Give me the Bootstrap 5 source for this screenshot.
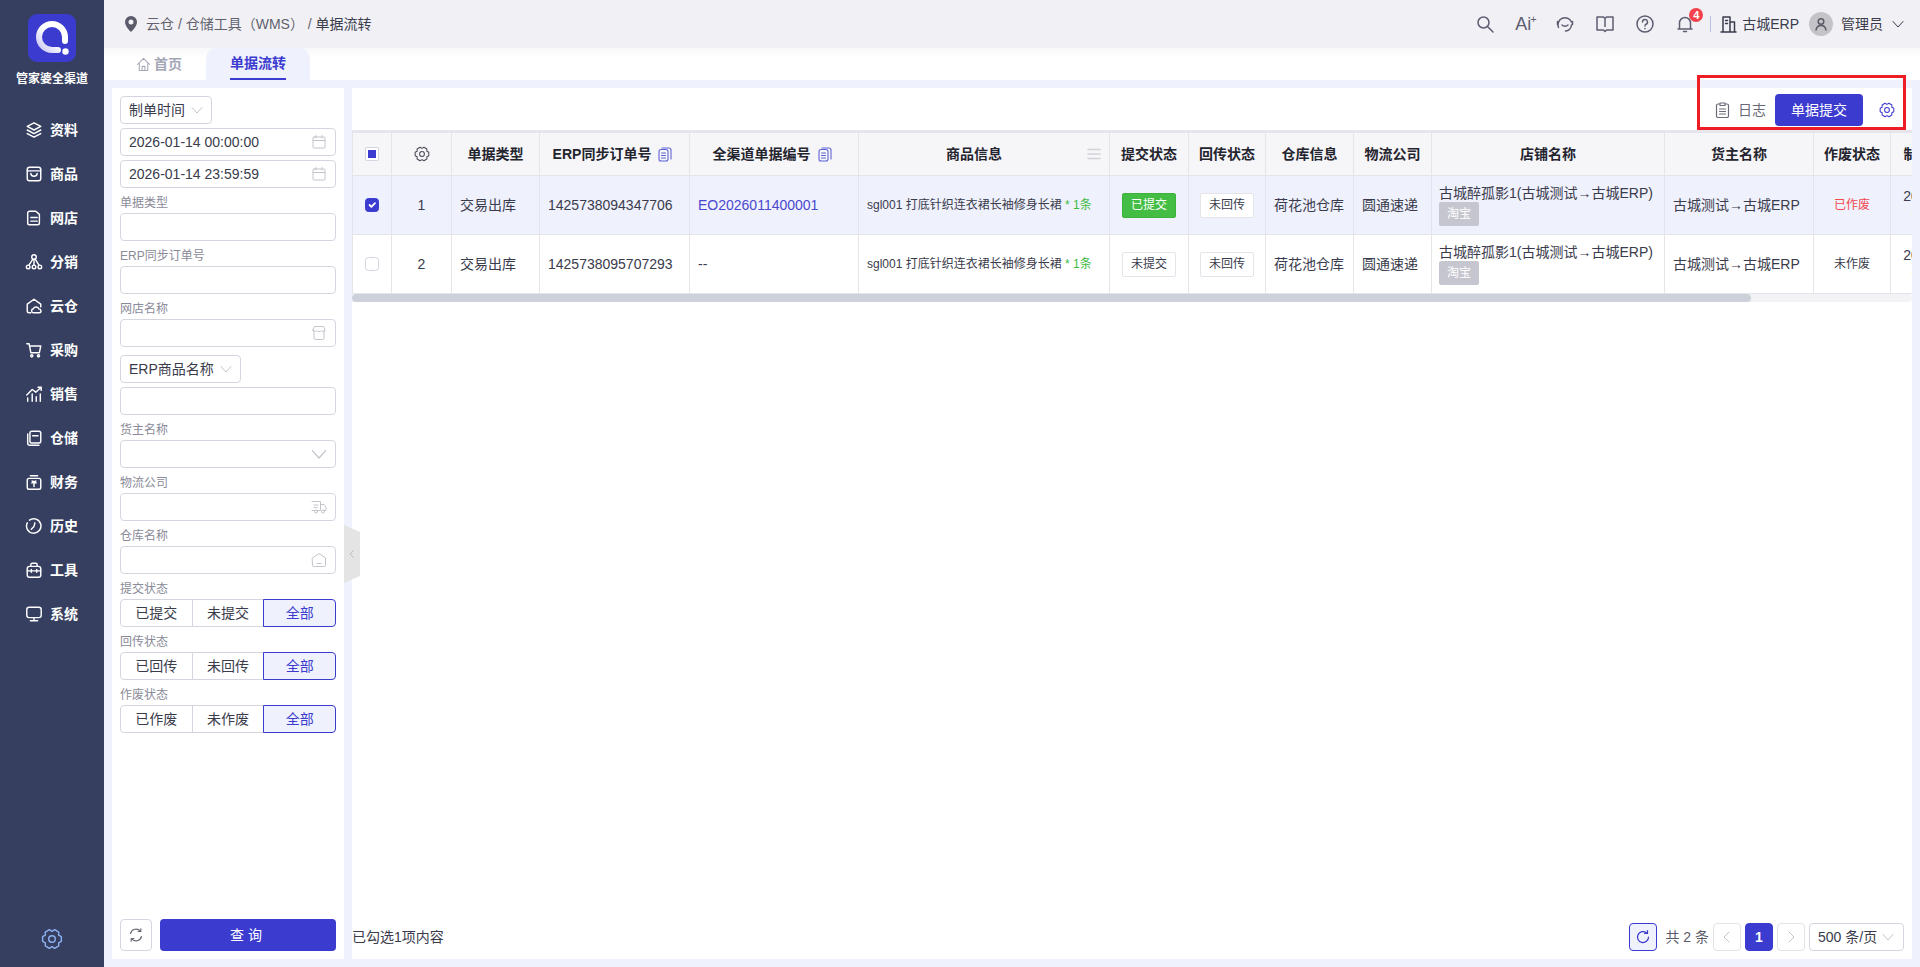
<!DOCTYPE html>
<html lang="zh-CN">
<head>
  <meta charset="UTF-8" />
  <meta name="viewport" content="width=device-width, initial-scale=1" />
  <title>单据流转</title>
  <link href="https://cdn.jsdelivr.net/npm/bootstrap@5.3.3/dist/css/bootstrap.min.css" rel="stylesheet" />
  <style>
    html, body { height: 967px; overflow: hidden; }
    body {
      background: #eff1fd;
      color: #3a3b4c;
      font-family: "Liberation Sans", "Noto Sans CJK SC", sans-serif;
      font-size: 14px;
    }
    svg { display: block; flex: none; fill: none; stroke: currentColor; stroke-width: 1.5; stroke-linecap: round; stroke-linejoin: round; }

    .side-bar { width: 104px; height: 967px; background: #363f60; color: #fff; }
    .logo-box { width: 48px; height: 48px; margin: 14px auto 0; stroke: none; }
    .logo-name { font-size: 12px; font-weight: 700; line-height: 18px; text-align: center; margin-top: 8px; margin-bottom: 20px; }
    .side-item { height: 44px; padding-left: 25px; gap: 7px; font-weight: 700; font-size: 14px; }
    .side-item svg { width: 18px; height: 18px; stroke-width: 1.6; }
    .side-gear { color: #8db0f0; width: 22px; height: 22px; margin: auto auto 17px; }

    .main-col { min-width: 0; }
    .top-bar { height: 48px; background: #f1f1f5; padding: 0 16px 0 21px; }
    .crumb { gap: 9px; color: #62626f; }
    .crumb b { font-weight: 400; color: #3a3b4c; }
    .crumb svg { width: 12px; height: 16px; color: #5a5a6b; stroke: none; }
    .top-tools { gap: 20px; color: #5d5d72; }
    .top-tools svg { width: 20px; height: 20px; }
    .ai-mark { width: 20px; font-size: 18px; line-height: 20px; white-space: nowrap; }
    .ai-mark sup { font-size: 11px; top: -.6em; margin-left: -1px; }
    .bell-badge { top: -6px; right: -8px; width: 14px; height: 14px; background: #f2414a; color: #fff; font-size: 11px; font-weight: 700; line-height: 14px; border-radius: 50%; text-align: center; }
    .top-sep { width: 1px; height: 16px; background: #b9c1e6; margin: 0 -11px 0 -5px; }
    .user-chip { gap: 8px; color: #3a3b4c; }
    .user-chip .bld-ico { width: 17px; height: 20px; margin-right: -3px; }
    .user-chip .arrow-ico { width: 12px; height: 12px; margin-left: 1px; }
    .user-face { width: 24px; height: 24px; border-radius: 50%; background: #c4c4c8; color: #5a5a66; margin-left: 2px; }
    .user-face svg { width: 14px; height: 14px; }

    .tab-strip { height: 32px; background: linear-gradient(#f8f8fa, #fff 30%); padding-left: 32px; }
    .tab-home { width: 70px; gap: 3px; color: #a3a6b5; font-weight: 700; }
    .tab-home svg { width: 15px; height: 15px; }
    .tab-on { width: 104px; height: 32px; border-radius: 10px 10px 0 0; background: #eff1fd; color: #3c3bcf; font-weight: 700; }
    .tab-on span { display: block; width: 56px; height: 32px; line-height: 30px; border-bottom: 2px solid #3c3bcf; text-align: center; }

    .work-area { height: 887px; padding: 8px; gap: 8px; }
    .filter-panel { width: 232px; background: #fff; padding: 8px; }
    .fld { height: 28px; border: 1px solid #d5d5df; border-radius: 4px; background: #fff; padding: 0 8px; color: #3a3b4c; }
    .fld svg { width: 16px; height: 16px; color: #c4c4cc; margin-left: auto; }
    .fld-pick { display: inline-flex; gap: 4px; align-self: flex-start; white-space: nowrap; }
    .fld-pick svg { width: 12px; height: 12px; margin-left: 2px; }
    .fld-gap { margin-top: 4px; }
    .fld-gap-lg { margin-top: 8px; }
    .fld-label { display: block; height: 25px; padding-top: 5px; line-height: 20px; font-size: 12px; color: #8a8a98; margin: 0; }
    .btn-group .seg-btn { height: 28px; flex: 1 1 0; padding: 0; font-size: 14px; line-height: 26px; border: 1px solid #d5d5df; color: #3a3b4c; background: #fff; border-radius: 4px; }
    .btn-group .seg-btn.on { background: #eff1fd; border-color: #3c3bcf; color: #3c3bcf; position: relative; z-index: 2; }
    .filter-foot { margin-top: auto; gap: 8px; }
    .reset-btn { width: 32px; height: 32px; padding: 0; border: 1px solid #d5d5df; color: #6a6a78; background: #fff; border-radius: 4px; }
    .reset-btn svg { width: 16px; height: 16px; }
    .query-btn, .send-btn { background: #3c3bcf; color: #fff; border: 0; border-radius: 4px; font-size: 14px; height: 32px; padding: 0; }
    .query-btn:hover, .send-btn:hover { background: #3c3bcf; color: #fff; }
    .query-btn { flex: 1; letter-spacing: 4px; }

    .main-panel { flex: 1; min-width: 0; background: #fff; }
    .tool-row { height: 42px; padding: 6px 17px 4px 0; }
    .log-link { gap: 8px; color: #6a6a78; margin-right: 9px; }
    .log-link svg { width: 15px; height: 16px; }
    .send-btn { width: 88px; }
    .cog-btn { width: 16px; height: 16px; margin-left: 16px; color: #3c3bcf; }
    .red-frame { left: 1345px; top: -13px; width: 209px; height: 55px; border: 3px solid #ee1c25; pointer-events: none; z-index: 5; }
    .grip { left: -8px; top: 437px; width: 16px; height: 58px; background: #e4e4e4; color: #a9a9ae; clip-path: polygon(0 0, 100% 12%, 100% 88%, 0 100%); z-index: 6; }
    .grip svg { width: 8px; height: 10px; }

    .grid-wrap { overflow: hidden; border-top: 2px solid #e6e6ec; }
    .flow-table { width: 1739px; table-layout: fixed; margin: 0; border-color: #e4e4ea; --bs-table-color: #3a3b4c; }
    .flow-table th, .flow-table td { padding: 0 8px; vertical-align: middle; font-size: 14px; line-height: 17px; }
    .flow-table th { height: 43px; background: #f6f6f9; color: #24242e; font-weight: 700; text-align: center; white-space: nowrap; }
    .flow-table td { height: 59px; }
    .flow-table tr.sel td { background: #eff1fd; }
    .flow-table th.date-head { padding-right: 24px; }
    .flow-table th.goods-head { padding-right: 28px; }
    .flow-table td.shop-cell { padding-left: 7px; }
    .flow-table td.date-cell { padding-left: 9px; white-space: nowrap; }
    .date-txt { display: inline-block; width: 78px; line-height: 18px; text-align: center; }
    .c1 { width: 39px; } .c2 { width: 60px; } .c3 { width: 88px; } .c4 { width: 150px; } .c5 { width: 169px; }
    .c6 { width: 251px; } .c7 { width: 79px; } .c8 { width: 77px; } .c9 { width: 88px; } .c10 { width: 78px; }
    .c11 { width: 233px; } .c12 { width: 149px; } .c13 { width: 77px; } .c14 { width: 98px; } .c15 { width: 103px; }
    .copy-ico { display: inline-block; width: 14px; height: 15px; color: #5f63d6; margin: 0 4px 0 7px; vertical-align: -3px; }
    .cell-gear { width: 16px; height: 16px; color: #4a4a58; margin: 0 auto; }
    .menu-ico { right: 8px; top: 14px; width: 14px; height: 14px; color: #d2d2d8; }
    .tick-box { width: 14px; height: 14px; margin: 0 auto; display: block; float: none; border: 1px solid #d5d5df; border-radius: 2px; }
    .tick-box:checked { background-color: #3c3bcf; border-color: #3c3bcf; }
    .tick-part { width: 14px; height: 14px; margin: 0 auto; border: 1px solid #d5d5df; border-radius: 2px; background: #fff; padding: 2px; }
    .tick-part i { display: block; width: 8px; height: 8px; background: #3c3bcf; }
    .flow-table td.doc-no { color: #4a48cf; }
    .flow-table td.goods { font-size: 12px; white-space: nowrap; }
    .goods em { font-style: normal; color: #3dbb3f; }
    .state-tag { display: inline-block; width: 54px; height: 25px; line-height: 23px; font-size: 12px; border: 1px solid #e4e4ea; border-radius: 2px; background: #fff; text-align: center; }
    .state-tag.done { background: #43bd43; border-color: #3cb23c; color: #fff; }
    .shop-tag { display: block; width: 40px; height: 24px; line-height: 24px; background: #c6c6d0; color: #fff; border-radius: 2px; text-align: center; font-size: 12px; }
    .flow-table td.void-red { color: #f2474b; font-size: 12px; }
    .flow-table td.void-gray { font-size: 12px; }
    .scroll-track { height: 8px; background: #f3f3f6; border-radius: 0 4px 4px 0; }
    .scroll-thumb { height: 8px; background: #cdd2da; border-radius: 4px; }

    .foot-row { height: 28px; margin: auto 8px 8px 0; }
    .pg-btn { width: 28px; height: 28px; border: 1px solid #e2e2e8; border-radius: 4px; color: #c4c4cc; background: #fff; }
    .pg-btn svg { width: 12px; height: 12px; }
    .pg-btn.on { background: #3c3bcf; border-color: #3c3bcf; color: #fff; font-weight: 700; }
    .pg-btn.spin { background: #eff1fd; border-color: #3c3bcf; color: #3c3bcf; margin-right: 4px; }
    .pg-btn.spin svg { width: 16px; height: 16px; }
    .pg-total { color: #5a5a68; }
    .pg-size { width: 95px; height: 28px; border: 1px solid #d5d5df; border-radius: 4px; padding: 0 8px; gap: 5px; white-space: nowrap; }
    .pg-size svg { width: 12px; height: 12px; color: #c4c4cc; }
  </style>
</head>
<body>

<svg width="0" height="0" class="position-absolute">
  <defs>
    <symbol id="i-layers" viewBox="0 0 20 20"><path d="M10 2l7.500 4L10 10 2.500 6z"/><path d="M2.500 10L10 14l7.500-4"/><path d="M2.500 14L10 18l7.500-4"/></symbol>
    <symbol id="i-bag" viewBox="0 0 20 20"><rect x="2.500" y="2.500" width="15" height="15" rx="2.500"/><path d="M2.500 6.500h15"/><path d="M6.500 9.500c.5 4 6.500 4 7 0"/></symbol>
    <symbol id="i-doc" viewBox="0 0 20 20"><path d="M5 2.500h7l4 3.500v9.500a2 2 0 0 1-2 2H5a2 2 0 0 1-2-2v-11a2 2 0 0 1 2-2z"/><path d="M6.500 9.500h7M6.500 13.500h7"/></symbol>
    <symbol id="i-tree" viewBox="0 0 20 20"><circle cx="10" cy="4.500" r="2.500"/><circle cx="3.500" cy="15.500" r="2"/><circle cx="10" cy="15.500" r="2"/><circle cx="16.500" cy="15.500" r="2"/><path d="M8.500 7l-4 6.500M10 7v6.500M11.500 7l4 6.500"/></symbol>
    <symbol id="i-cloud" viewBox="0 0 20 20"><path d="M6.500 17.500H4.500a2 2 0 0 1-2-2V8L10 2.500 17.500 8v3"/><path d="M9 17.500a2.300 2.300 0 0 1 .3-4.500 3.300 3.300 0 0 1 6.200.5 2 2 0 0 1 .5 4z"/></symbol>
    <symbol id="i-cart" viewBox="0 0 20 20"><path d="M2 3h2.500l2 10h9.500l1.500-7.500H5"/><circle cx="7.500" cy="16.500" r="1.200"/><circle cx="15" cy="16.500" r="1.200"/></symbol>
    <symbol id="i-chart" viewBox="0 0 20 20"><path d="M2 11l6-6 4 3 6-5.500M14.500 2.500H18V6"/><path d="M3 14.500V18M8 10v8M12.500 13v5M17 10v8"/></symbol>
    <symbol id="i-box" viewBox="0 0 20 20"><path d="M3 5.500v10a2.500 2.500 0 0 0 2.500 2.500h10"/><rect x="5.500" y="2.500" width="12" height="13" rx="2"/><path d="M8.500 7.500h6"/></symbol>
    <symbol id="i-cash" viewBox="0 0 20 20"><rect x="2.500" y="6" width="15" height="12" rx="2"/><path d="M6 3h8M10 9v6M7.500 11h5M8 9l2 2 2-2"/></symbol>
    <symbol id="i-clock" viewBox="0 0 20 20"><path d="M5 3.500a8 8 0 1 1-2.500 3"/><path d="M11 6.500l-1 4-3 3"/></symbol>
    <symbol id="i-tool" viewBox="0 0 20 20"><rect x="2.500" y="6" width="15" height="12" rx="2.500"/><path d="M6.500 6V4a1.500 1.500 0 0 1 1.500-1.500h4A1.500 1.500 0 0 1 13.500 4v2M2.500 11h15M7 9.500v3M13 9.500v3"/></symbol>
    <symbol id="i-screen" viewBox="0 0 20 20"><rect x="2" y="2.500" width="16" height="11.500" rx="2.500"/><path d="M10 14v3.500M6 17.500h8"/></symbol>
    <symbol id="i-gear" viewBox="0 0 20 20"><path d="M18.500 7.900L18.500 12.100L16.060 13.500L16.110 16.330L12.430 18.460L10 17L7.570 18.460L3.890 16.330L3.940 13.500L1.460 12.100L1.460 7.900L3.940 6.500L3.890 3.670L7.570 1.540L10 3L12.430 1.540L16.110 3.670L16.060 6.500z" stroke-width="1.300"/><circle cx="10" cy="10" r="3" stroke-width="1.300"/></symbol>
    <symbol id="i-down" viewBox="0 0 12 12"><path d="M1 3.500L6 9l5-5.500" stroke-width="1"/></symbol>
    <symbol id="i-left" viewBox="0 0 12 12"><path d="M8 1L3 6l5 5" stroke-width="1"/></symbol>
    <symbol id="i-right" viewBox="0 0 12 12"><path d="M4 1l5 5-5 5" stroke-width="1"/></symbol>
    <symbol id="i-cal" viewBox="0 0 16 16"><rect x="2" y="3" width="12" height="11" rx="1" stroke-width="1"/><path d="M2 6.500h12M5 1.500V4M11 1.500V4" stroke-width="1"/></symbol>
    <symbol id="i-sync" viewBox="0 0 16 16"><path d="M2.500 6.500a5.700 5.700 0 0 1 10-2.200M13.500 9.500a5.700 5.700 0 0 1-10 2.200" stroke-width="1.200"/><path d="M12.800 1.800v2.700h-2.700M3.200 14.200v-2.700h2.700" stroke-width="1.200"/></symbol>
    <symbol id="i-copy" viewBox="0 0 14 15"><rect x="1" y="2.500" width="9" height="11.500" rx="2" stroke-width="1.100"/><path d="M4 1h7a2 2 0 0 1 2 2v9M3.500 6h4M3.500 8.500h4M3.500 11h4" stroke-width="1.100"/></symbol>
  </defs>
</svg>

<div class="d-flex">
  <aside class="side-bar d-flex flex-column flex-shrink-0">
    <svg class="logo-box" viewBox="0 0 48 48">
      <defs><linearGradient id="lg" x1="0" y1="1" x2="1" y2="0"><stop offset="0" stop-color="#c8c6f3"/><stop offset=".5" stop-color="#ffffff"/></linearGradient></defs>
      <rect width="48" height="48" rx="9" fill="#3c3bcf"/>
      <path d="M30 36H24a13 13 0 1 1 13-13v4" fill="none" stroke="url(#lg)" stroke-width="6" stroke-linecap="round"/>
      <circle cx="37.500" cy="37.500" r="3.200" fill="#fff"/>
    </svg>
    <div class="logo-name">管家婆全渠道</div>
    <div class="side-item d-flex align-items-center"><svg><use href="#i-layers"/></svg>资料</div>
    <div class="side-item d-flex align-items-center"><svg><use href="#i-bag"/></svg>商品</div>
    <div class="side-item d-flex align-items-center"><svg><use href="#i-doc"/></svg>网店</div>
    <div class="side-item d-flex align-items-center"><svg><use href="#i-tree"/></svg>分销</div>
    <div class="side-item d-flex align-items-center"><svg><use href="#i-cloud"/></svg>云仓</div>
    <div class="side-item d-flex align-items-center"><svg><use href="#i-cart"/></svg>采购</div>
    <div class="side-item d-flex align-items-center"><svg><use href="#i-chart"/></svg>销售</div>
    <div class="side-item d-flex align-items-center"><svg><use href="#i-box"/></svg>仓储</div>
    <div class="side-item d-flex align-items-center"><svg><use href="#i-cash"/></svg>财务</div>
    <div class="side-item d-flex align-items-center"><svg><use href="#i-clock"/></svg>历史</div>
    <div class="side-item d-flex align-items-center"><svg><use href="#i-tool"/></svg>工具</div>
    <div class="side-item d-flex align-items-center"><svg><use href="#i-screen"/></svg>系统</div>
    <svg class="side-gear"><use href="#i-gear"/></svg>
  </aside>

  <div class="main-col flex-grow-1">
    <header class="top-bar d-flex align-items-center justify-content-between">
      <div class="crumb d-flex align-items-center">
        <svg viewBox="0 0 12 16"><path fill="currentColor" fill-rule="evenodd" d="M6 0a6 6 0 0 1 6 6c0 3.500-3.500 7.500-6 10C3.500 13.500 0 9.500 0 6a6 6 0 0 1 6-6zm0 3.500a2.500 2.500 0 1 0 0 5 2.500 2.500 0 0 0 0-5z"/></svg>
        <span>云仓 / 仓储工具（WMS） / <b>单据流转</b></span>
      </div>
      <div class="top-tools d-flex align-items-center">
        <svg viewBox="0 0 20 20"><circle cx="8.500" cy="8.500" r="5.500"/><path d="M13 13l5 5"/></svg>
        <span class="ai-mark">Ai<sup>+</sup></span>
        <svg viewBox="0 0 20 20"><path d="M3.500 13.500A7 7 0 1 1 16.500 8"/><path d="M2.500 7.500v3M17.500 7.500v3M7 11c1.500 1.500 4.500 1.500 6 0M16.500 11a6.500 6.500 0 0 1-6 6"/></svg>
        <svg viewBox="0 0 20 20"><path d="M2 3h6.500L10 4.500 11.500 3H18v13h-6.500L10 17.500 8.500 16H2zM10 4.500v8"/></svg>
        <svg viewBox="0 0 20 20"><circle cx="10" cy="10" r="8"/><path d="M7.500 8a2.500 2.500 0 1 1 3.500 2.300c-.7.300-1 .8-1 1.700M10 14.500v.2"/></svg>
        <span class="position-relative"><svg viewBox="0 0 20 20"><path d="M4.500 15V9a5.500 5.500 0 0 1 11 0v6zM3 15h14M8.500 17.500h3"/></svg><span class="bell-badge position-absolute">4</span></span>
        <span class="top-sep"></span>
        <div class="user-chip d-flex align-items-center">
          <svg class="bld-ico" viewBox="0 0 17 20"><path d="M1 18h15M3 18V3h7v15M10 8h4.500v10M5.500 6.500h2M5.500 9.500h2"/></svg>
          <span>古城ERP</span>
          <span class="user-face d-flex align-items-center justify-content-center"><svg viewBox="0 0 14 14"><circle cx="7" cy="4.500" r="2.800"/><path d="M2 13c.5-3 2.500-4.500 5-4.500s4.500 1.500 5 4.500"/></svg></span>
          <span>管理员</span>
          <svg class="arrow-ico" viewBox="0 0 12 12"><use href="#i-down"/></svg>
        </div>
      </div>
    </header>

    <div class="tab-strip d-flex align-items-center">
      <div class="tab-home d-flex align-items-center"><svg viewBox="0 0 16 16"><path d="M1.500 8L8 1.500 14.500 8M3.500 7v7.500h9V7M6.500 14.500V10h3v4.500" stroke-width="1.100"/></svg>首页</div>
      <div class="tab-on d-flex justify-content-center"><span>单据流转</span></div>
    </div>

    <div class="work-area d-flex">
      <form class="filter-panel d-flex flex-column flex-shrink-0">
        <div class="fld fld-pick align-items-center">制单时间<svg><use href="#i-down"/></svg></div>
        <div class="fld fld-gap d-flex align-items-center">2026-01-14 00:00:00<svg><use href="#i-cal"/></svg></div>
        <div class="fld fld-gap d-flex align-items-center">2026-01-14 23:59:59<svg><use href="#i-cal"/></svg></div>
        <label class="fld-label">单据类型</label>
        <div class="fld"></div>
        <label class="fld-label">ERP同步订单号</label>
        <div class="fld"></div>
        <label class="fld-label">网店名称</label>
        <div class="fld d-flex align-items-center"><svg viewBox="0 0 16 16"><path d="M3 5.500V13a1.500 1.500 0 0 0 1.500 1.500h7A1.500 1.500 0 0 0 13 13V5.500M2 5l1.500-3.500h9L14 5c0 2-3 2-3.500.5-.5 1.500-4.500 1.500-5 0C5 7 2 7 2 5z" stroke-width="1"/></svg></div>
        <div class="fld fld-pick fld-gap-lg align-items-center">ERP商品名称<svg><use href="#i-down"/></svg></div>
        <div class="fld fld-gap"></div>
        <label class="fld-label">货主名称</label>
        <div class="fld d-flex align-items-center"><svg><use href="#i-down"/></svg></div>
        <label class="fld-label">物流公司</label>
        <div class="fld d-flex align-items-center"><svg viewBox="0 0 16 16"><path d="M1 2.500h8.500v9H1M9.500 5.500H13l2 3v3h-2M3 6h4M3 8.500h3" stroke-width="1"/><circle cx="5" cy="12.500" r="1.500" stroke-width="1"/><circle cx="12" cy="12.500" r="1.500" stroke-width="1"/></svg></div>
        <label class="fld-label">仓库名称</label>
        <div class="fld d-flex align-items-center"><svg viewBox="0 0 16 16"><path d="M1.500 6L8 1.500 14.500 6v7.500a1 1 0 0 1-1 1h-11a1 1 0 0 1-1-1zM6 11.500h4" stroke-width="1"/></svg></div>
        <label class="fld-label">提交状态</label>
        <div class="btn-group"><button type="button" class="btn seg-btn">已提交</button><button type="button" class="btn seg-btn">未提交</button><button type="button" class="btn seg-btn on">全部</button></div>
        <label class="fld-label">回传状态</label>
        <div class="btn-group"><button type="button" class="btn seg-btn">已回传</button><button type="button" class="btn seg-btn">未回传</button><button type="button" class="btn seg-btn on">全部</button></div>
        <label class="fld-label">作废状态</label>
        <div class="btn-group"><button type="button" class="btn seg-btn">已作废</button><button type="button" class="btn seg-btn">未作废</button><button type="button" class="btn seg-btn on">全部</button></div>
        <div class="filter-foot d-flex">
          <button type="button" class="btn reset-btn d-flex align-items-center justify-content-center"><svg><use href="#i-sync"/></svg></button>
          <button type="button" class="btn query-btn">查询</button>
        </div>
      </form>

      <main class="main-panel d-flex flex-column position-relative">
        <div class="grip position-absolute d-flex align-items-center justify-content-center"><svg viewBox="0 0 12 12"><use href="#i-left"/></svg></div>
        <div class="red-frame position-absolute"></div>
        <div class="tool-row d-flex align-items-center justify-content-end">
          <div class="log-link d-flex align-items-center">
            <svg viewBox="0 0 15 16"><path d="M4.500 2H3a1.500 1.500 0 0 0-1.500 1.500v10.500A1.500 1.500 0 0 0 3 15.500h9a1.500 1.500 0 0 0 1.500-1.500V3.500A1.500 1.500 0 0 0 12 2h-1.500M5 1h5v2.500H5zM4.500 7h6M4.500 9.500h6M4.500 12h6" stroke-width="1.200"/></svg>
            日志
          </div>
          <button type="button" class="btn send-btn">单据提交</button>
          <svg class="cog-btn"><use href="#i-gear"/></svg>
        </div>
        <div class="grid-wrap">
          <table class="table table-bordered flow-table">
            <colgroup>
              <col class="c1"><col class="c2"><col class="c3"><col class="c4"><col class="c5"><col class="c6"><col class="c7"><col class="c8"><col class="c9"><col class="c10"><col class="c11"><col class="c12"><col class="c13"><col class="c14"><col class="c15">
            </colgroup>
            <thead>
              <tr>
                <th><div class="tick-part"><i></i></div></th>
                <th><svg class="cell-gear"><use href="#i-gear"/></svg></th>
                <th>单据类型</th>
                <th>ERP同步订单号<svg class="copy-ico"><use href="#i-copy"/></svg></th>
                <th>全渠道单据编号<svg class="copy-ico"><use href="#i-copy"/></svg></th>
                <th class="goods-head position-relative">商品信息<svg class="menu-ico position-absolute" viewBox="0 0 14 14"><path d="M1 2.500h12M1 7h12M1 11.500h12"/></svg></th>
                <th>提交状态</th>
                <th>回传状态</th>
                <th>仓库信息</th>
                <th>物流公司</th>
                <th>店铺名称</th>
                <th>货主名称</th>
                <th>作废状态</th>
                <th class="date-head">制单时间</th>
                <th>提交时间</th>
              </tr>
            </thead>
            <tbody>
              <tr class="sel">
                <td><input class="form-check-input tick-box" type="checkbox" checked aria-label="选择"></td>
                <td class="text-center">1</td>
                <td>交易出库</td>
                <td>1425738094347706</td>
                <td class="doc-no">EO2026011400001</td>
                <td class="goods">sgl001 打底针织连衣裙长袖修身长裙 <em>* 1条</em></td>
                <td class="text-center"><span class="state-tag done">已提交</span></td>
                <td class="text-center"><span class="state-tag">未回传</span></td>
                <td>荷花池仓库</td>
                <td>圆通速递</td>
                <td class="shop-cell">古城醉孤影1(古城测试→古城ERP)<span class="shop-tag">淘宝</span></td>
                <td>古城测试→古城ERP</td>
                <td class="text-center void-red">已作废</td>
                <td class="date-cell"><span class="date-txt">2026-01-14<br>00:00:00</span></td>
                <td class="date-cell"><span class="date-txt">2026-01-14<br>10:00:00</span></td>
              </tr>
              <tr>
                <td><input class="form-check-input tick-box" type="checkbox" aria-label="选择"></td>
                <td class="text-center">2</td>
                <td>交易出库</td>
                <td>1425738095707293</td>
                <td>--</td>
                <td class="goods">sgl001 打底针织连衣裙长袖修身长裙 <em>* 1条</em></td>
                <td class="text-center"><span class="state-tag">未提交</span></td>
                <td class="text-center"><span class="state-tag">未回传</span></td>
                <td>荷花池仓库</td>
                <td>圆通速递</td>
                <td class="shop-cell">古城醉孤影1(古城测试→古城ERP)<span class="shop-tag">淘宝</span></td>
                <td>古城测试→古城ERP</td>
                <td class="text-center void-gray">未作废</td>
                <td class="date-cell"><span class="date-txt">2026-01-14<br>00:00:00</span></td>
                <td class="date-cell"><span class="date-txt">2026-01-14<br>10:00:00</span></td>
              </tr>
            </tbody>
          </table>
        </div>
        <div class="scroll-track"><div class="scroll-thumb" style="width:1399px"></div></div>

        <div class="foot-row d-flex align-items-center justify-content-between">
          <span>已勾选1项内容</span>
          <div class="d-flex align-items-center gap-1">
            <span class="pg-btn spin d-flex align-items-center justify-content-center"><svg viewBox="0 0 16 16"><path d="M13.500 8A5.500 5.500 0 1 1 11.500 3.800M12.500 1.500v3h-3" stroke-width="1.200"/></svg></span>
            <span class="pg-total">共 2 条</span>
            <span class="pg-btn d-flex align-items-center justify-content-center"><svg><use href="#i-left"/></svg></span>
            <span class="pg-btn on d-flex align-items-center justify-content-center">1</span>
            <span class="pg-btn d-flex align-items-center justify-content-center"><svg><use href="#i-right"/></svg></span>
            <span class="pg-size d-flex align-items-center">500 条/页<svg><use href="#i-down"/></svg></span>
          </div>
        </div>
      </main>
    </div>
  </div>
</div>

<script src="https://cdn.jsdelivr.net/npm/bootstrap@5.3.3/dist/js/bootstrap.bundle.min.js"></script>
</body>
</html>
